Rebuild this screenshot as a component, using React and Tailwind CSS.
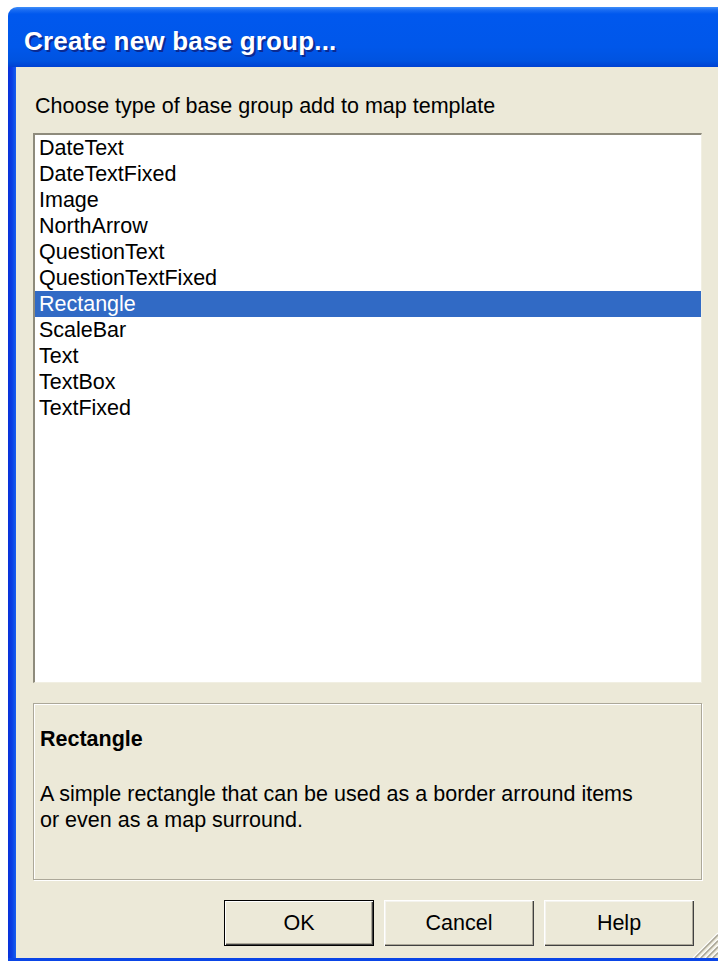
import React, { useState } from "react";

const TYPES = [
  "DateText",
  "DateTextFixed",
  "Image",
  "NorthArrow",
  "QuestionText",
  "QuestionTextFixed",
  "Rectangle",
  "ScaleBar",
  "Text",
  "TextBox",
  "TextFixed",
];

const DESCRIPTIONS = {
  Rectangle: [
    "A simple rectangle that can be used as a border arround items",
    "or even as a map surround.",
  ],
};

function ClassicButton({ children, isDefault }) {
  return (
    <button
      className={
        "w-[150px] h-[46px] bg-[#ece9d8] text-black text-[21.5px] leading-[26px] " +
        (isDefault
          ? "border border-black shadow-[inset_1px_1px_0_#fff,inset_-1px_-1px_0_#404040,inset_-2px_-2px_0_#aca899]"
          : "shadow-[inset_1px_1px_0_#fff,inset_-1px_-1px_0_#404040,inset_-2px_-2px_0_#aca899,inset_2px_2px_0_#f4f3ee]")
      }
    >
      {children}
    </button>
  );
}

function ResizeGrip() {
  return (
    <svg width="26" height="26" viewBox="0 0 26 26" className="absolute right-0 bottom-0">
      {[7, 13, 19, 25].map((o) => (
        <g key={o}>
          <line x1={26 - o} y1="26" x2="26" y2={26 - o} stroke="#ffffff" strokeWidth="1.2" />
          <line x1={26 - o + 1.8} y1="26" x2="26" y2={26 - o + 1.8} stroke="#aca899" strokeWidth="1.6" />
        </g>
      ))}
    </svg>
  );
}

export default function App() {
  const [selected, setSelected] = useState("Rectangle");
  const lines = DESCRIPTIONS[selected] || [];

  return (
    <div
      className="w-[718px] h-[961px] bg-white overflow-hidden"
      style={{ fontFamily: '"Liberation Sans", Arial, sans-serif' }}
    >
      <div className="ml-[8px] mt-[7px] w-[740px] flex flex-col">
        {/* Title bar */}
        <div className="h-[60px] rounded-t-[9px] bg-[linear-gradient(to_bottom,#3f8ff9_0px,#1a6cf2_3px,#0058ee_7px,#0057ea_40px,#0053e0_54px,#0042d2_60px)] flex items-center pl-[16px] pt-[8px]">
          <span className="text-white font-bold text-[26px] tracking-[0.2px] [text-shadow:2px_2px_0_#0b2a91]">
            Create new base group...
          </span>
        </div>

        <div className="flex">
          {/* Left frame edge */}
          <div className="w-[8px] bg-[linear-gradient(to_right,#0831d9,#0a3fe4_4px,#1960ef)]" />

          {/* Client area */}
          <div className="relative w-[702px] h-[891px] bg-[#ece9d8] flex flex-col pl-[17px] pt-[26px]">
            <div className="pl-[2px] text-[21.5px] leading-[26px] text-black">
              Choose type of base group add to map template
            </div>

            {/* List box */}
            <div className="mt-[14px] w-[669px] h-[550px] bg-white border-t-[2px] border-l-[2px] border-b border-r border-t-[#8e8b7c] border-l-[#8e8b7c] border-b-[#f1efe2] border-r-[#f1efe2]">
              {TYPES.map((t) => (
                <div
                  key={t}
                  onClick={() => setSelected(t)}
                  className={
                    "h-[26px] leading-[26px] pl-[4px] text-[21.5px] " +
                    (t === selected ? "bg-[#316ac5] text-white" : "text-black")
                  }
                >
                  {t}
                </div>
              ))}
            </div>

            {/* Description panel */}
            <div className="mt-[20px] w-[669px] h-[177px] border border-[#aca899] shadow-[inset_1px_1px_0_#fff,1px_1px_0_#fff] pl-[6px] pt-[22px] text-[21.5px] leading-[26px] text-black">
              <div className="font-bold">{selected}</div>
              <div className="mt-[29px]">
                {lines.map((l) => (
                  <div key={l}>{l}</div>
                ))}
              </div>
            </div>

            {/* Buttons */}
            <div className="mt-[20px] w-[669px] flex justify-end gap-[10px] pr-[8px]">
              <ClassicButton isDefault>OK</ClassicButton>
              <ClassicButton>Cancel</ClassicButton>
              <ClassicButton>Help</ClassicButton>
            </div>

            <ResizeGrip />
          </div>
        </div>

        {/* Bottom frame edge */}
        <div className="h-[3px] bg-[#0a45e6]" />
      </div>
    </div>
  );
}
